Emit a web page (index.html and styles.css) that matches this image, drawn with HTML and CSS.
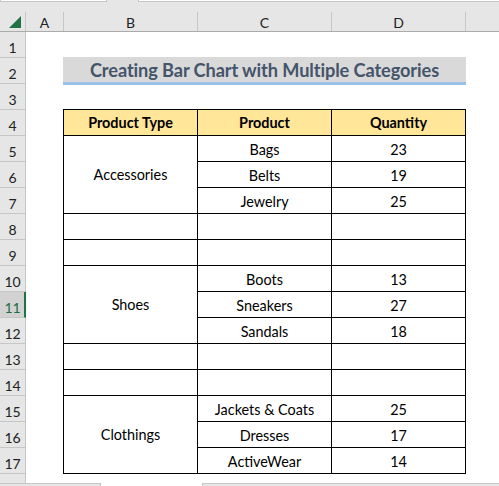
FILE: index.html
```html
<!DOCTYPE html>
<html>
<head>
<meta charset="utf-8">
<link rel="stylesheet" href="styles.css">
</head>
<body>
<div class="app">
  <div class="topstrip">
    <div class="fbox fbox-name"></div>
    <div class="fbox fbox-formula"></div>
  </div>
  <div class="colhead">
    <div class="corner">
      <svg width="13" height="12" viewBox="0 0 13 12"><polygon points="12,0 12,12 0,12" fill="#217346"/></svg>
    </div>
    <div class="ch ch-a">A</div>
    <div class="ch ch-w">B</div>
    <div class="ch ch-w">C</div>
    <div class="ch ch-w">D</div>
    <div class="ch ch-rest"></div>
  </div>
  <div class="body">
    <div class="rowhead">
      <div class="rh">1</div>
      <div class="rh">2</div>
      <div class="rh">3</div>
      <div class="rh">4</div>
      <div class="rh">5</div>
      <div class="rh">6</div>
      <div class="rh">7</div>
      <div class="rh">8</div>
      <div class="rh">9</div>
      <div class="rh">10</div>
      <div class="rh rh-sel">11</div>
      <div class="rh">12</div>
      <div class="rh">13</div>
      <div class="rh">14</div>
      <div class="rh">15</div>
      <div class="rh">16</div>
      <div class="rh">17</div>
      <div class="rh rh-part"></div>
    </div>
    <div class="cells">
      <div class="title">Creating Bar Chart with Multiple Categories</div>
      <div class="table">
        <div class="c hd">Product Type</div>
        <div class="c hd">Product</div>
        <div class="c hd">Quantity</div>

        <div class="c m">Accessories</div>
        <div class="c">Bags</div><div class="c">23</div>
        <div class="c">Belts</div><div class="c">19</div>
        <div class="c">Jewelry</div><div class="c">25</div>

        <div class="c"></div><div class="c"></div><div class="c"></div>
        <div class="c"></div><div class="c"></div><div class="c"></div>

        <div class="c m">Shoes</div>
        <div class="c">Boots</div><div class="c">13</div>
        <div class="c">Sneakers</div><div class="c">27</div>
        <div class="c">Sandals</div><div class="c">18</div>

        <div class="c"></div><div class="c"></div><div class="c"></div>
        <div class="c"></div><div class="c"></div><div class="c"></div>

        <div class="c m">Clothings</div>
        <div class="c">Jackets &amp; Coats</div><div class="c">25</div>
        <div class="c">Dresses</div><div class="c">17</div>
        <div class="c">ActiveWear</div><div class="c">14</div>
      </div>
    </div>
  </div>
  <div class="bottombar">
    <div class="bb bb-left"></div>
    <div class="bb-gap"></div>
    <div class="bb bb-right"></div>
  </div>
</div>
</body>
</html>
```

FILE: styles.css
```css
html, body {
  margin: 0;
  padding: 0;
}
body {
  width: 499px;
  height: 486px;
  overflow: hidden;
  background: #ffffff;
  font-family: Lato, "Open Sans", sans-serif;
  color: #000;
}
.app {
  display: flex;
  flex-direction: column;
  width: 499px;
  height: 486px;
}
.topstrip {
  height: 12px;
  background: #e6e6e6;
  display: flex;
  align-items: flex-start;
  flex: none;
}
.fbox {
  height: 1px;
  background: #ffffff;
  border: 1px solid #c6c6c6;
  border-top: none;
}
.fbox-name {
  width: 105px;
}
.fbox-formula {
  margin-left: 31px;
  flex: 1;
  border-right: none;
}
.colhead {
  height: 19px;
  background: #e6e6e6;
  border-bottom: 1px solid #ababab;
  display: flex;
  flex: none;
}
.corner {
  border-right: 1px solid #c6c6c6;
  display: flex;
  align-items: flex-end;
  justify-content: flex-end;
  padding: 0 3px 3px 0;
  box-sizing: border-box;
  width: 26px;
}
.ch {
  box-sizing: border-box;
  border-right: 1px solid #c6c6c6;
  display: flex;
  align-items: center;
  justify-content: center;
  font-size: 14px;
  color: #222;
  padding-top: 1px;
}
.ch-a { width: 38px; }
.ch-w { width: 134px; }
.ch-rest { flex: 1; border-right: none; }
.body {
  display: flex;
  flex: none;
  height: 451px;
}
.rowhead {
  width: 26px;
  flex: none;
  box-sizing: border-box;
  background: #e6e6e6;
  border-right: 1px solid #c6c6c6;
  display: flex;
  flex-direction: column;
}
.rh {
  flex: none;
  border-bottom: 1px solid #c6c6c6;
  display: flex;
  align-items: flex-end;
  justify-content: center;
  font-size: 14px;
  line-height: 17px;
  padding-bottom: 1px;
  box-sizing: content-box;
  height: 24px;
  color: #222;
}
.rh-sel {
  background: #d2d2d2;
  color: #1e6b41;
  margin-right: -1px;
  border-right: 2px solid #217346;
  padding-left: 1px;
}
.rh-part {
  border-bottom: none;
}
.cells {
  flex: 1;
  padding-left: 37px;
  padding-top: 25px;
  box-sizing: border-box;
}
.title {
  width: 403px;
  background: #d9d9d9;
  border-bottom: 3px solid #9bc2e6;
  color: #44546a;
  font-weight: 700;
  font-size: 18.2px;
  letter-spacing: -0.1px;
  display: flex;
  align-items: center;
  justify-content: center;
  padding-top: 0;
  box-sizing: content-box;
  height: 25px;
}
.table {
  margin-top: 24px;
  width: 403px;
  box-sizing: border-box;
  background: #000;
  padding: 1px;
  display: grid;
  grid-template-columns: 133px 133px 133px;
  grid-auto-rows: 25px;
  gap: 1px;
}
.c {
  background: #fff;
  display: flex;
  align-items: center;
  justify-content: center;
  font-size: 14.4px;
  padding-top: 1px;
  box-sizing: border-box;
}
.c.hd {
  background: #ffe699;
  font-weight: 700;
  padding-top: 0;
}
.c.m {
  grid-row: span 3;
  padding-top: 0;
}
.bottombar {
  flex: none;
  height: 3px;
  display: flex;
  background: #ffffff;
}
.bb {
  background: #e6e6e6;
  border-top: 1px solid #c6c6c6;
}
.bb-left {
  width: 100px;
  border-right: 1px solid #c6c6c6;
}
.bb-gap {
  width: 101px;
}
.bb-right {
  flex: 1;
  border-left: 1px solid #c6c6c6;
}
```
